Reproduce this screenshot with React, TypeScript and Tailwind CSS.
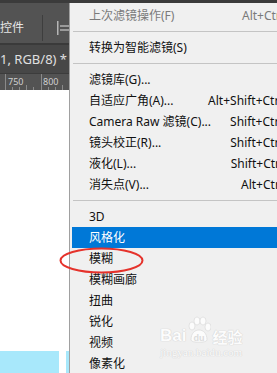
import React from "react";

const FONT = { fontFamily: '"Noto Sans", "Noto Sans CJK SC", sans-serif' };

type Item =
  | { type: "item"; label: string; shortcut?: string; disabled?: boolean; active?: boolean }
  | { type: "sep" };

const items: Item[] = [
  { type: "item", label: "上次滤镜操作(F)", shortcut: "Alt+Ctrl+F", disabled: true },
  { type: "sep" },
  { type: "item", label: "转换为智能滤镜(S)" },
  { type: "sep" },
  { type: "item", label: "滤镜库(G)..." },
  { type: "item", label: "自适应广角(A)...", shortcut: "Alt+Shift+Ctrl+A" },
  { type: "item", label: "Camera Raw 滤镜(C)...", shortcut: "Shift+Ctrl+A" },
  { type: "item", label: "镜头校正(R)...", shortcut: "Shift+Ctrl+R" },
  { type: "item", label: "液化(L)...", shortcut: "Shift+Ctrl+X" },
  { type: "item", label: "消失点(V)...", shortcut: "Alt+Ctrl+V" },
  { type: "sep" },
  { type: "item", label: "3D" },
  { type: "item", label: "风格化", active: true },
  { type: "item", label: "模糊" },
  { type: "item", label: "模糊画廊" },
  { type: "item", label: "扭曲" },
  { type: "item", label: "锐化" },
  { type: "item", label: "视频" },
  { type: "item", label: "像素化" },
];

function LeftPanel() {
  return (
    <div className="w-[69px] shrink-0 flex flex-col overflow-hidden">
      <div className="h-[40px] bg-[#535353] flex items-center pt-[9px] relative overflow-hidden">
        <span className="text-[12px] text-[#e6e6e6] ml-[-24px] whitespace-nowrap" style={FONT}>
          变换控件
        </span>
        <div className="absolute left-[42px] top-[12px] w-px h-[26px] bg-[#3e3e3e]" />
        <svg className="absolute left-[57px] top-[18px]" width="12" height="14" viewBox="0 0 12 14">
          <rect x="0" y="0" width="1.5" height="14" fill="#b5b5b5" />
          <rect x="3" y="4" width="9" height="2" fill="#9a9a9a" />
          <rect x="3" y="8" width="9" height="2" fill="#9a9a9a" />
        </svg>
      </div>
      <div className="h-[2px] bg-[#3a3a3a]" />
      <div className="h-[28px] bg-[#474747] flex items-center pt-[2px]">
        <span className="text-[13px] text-[#e0e0e0] whitespace-nowrap" style={FONT}>
          1, RGB/8) *
        </span>
      </div>
      <div className="h-[17px] bg-[#535353] border-t border-[#3c3c3c] relative">
        <div className="absolute left-[5px] top-0 w-px h-full bg-[#8a8a8a]" />
        <div className="absolute left-[41px] top-0 w-px h-full bg-[#8a8a8a]" />
        <span className="absolute left-[8px] top-[1px] text-[9px] text-[#cfcfcf]" style={FONT}>750</span>
        <span className="absolute left-[43px] top-[1px] text-[9px] text-[#cfcfcf]" style={FONT}>800</span>
        <div className="absolute left-[12px] bottom-0 w-px h-[3px] bg-[#8a8a8a]" />
        <div className="absolute left-[19px] bottom-0 w-px h-[3px] bg-[#8a8a8a]" />
        <div className="absolute left-[26px] bottom-0 w-px h-[5px] bg-[#8a8a8a]" />
        <div className="absolute left-[33px] bottom-0 w-px h-[3px] bg-[#8a8a8a]" />
        <div className="absolute left-[48px] bottom-0 w-px h-[3px] bg-[#8a8a8a]" />
        <div className="absolute left-[55px] bottom-0 w-px h-[3px] bg-[#8a8a8a]" />
        <div className="absolute left-[62px] bottom-0 w-px h-[5px] bg-[#8a8a8a]" />
      </div>
      <div className="flex-1 bg-white flex flex-col justify-end">
        <div className="h-[23px] flex">
          <div className="w-[59px] bg-[#a8e8fb]" />
          <div className="w-[7px]" />
          <div className="flex-1 bg-[#a8e8fb]" />
        </div>
      </div>
    </div>
  );
}

function Menu() {
  return (
    <div className="w-[240px] shrink-0 bg-[#f0f0f0] border-l border-[#a0a0a0] pt-[2px] pl-[2px]" style={FONT}>
      {items.map((it, i) =>
        it.type === "sep" ? (
          <div key={i} className="h-[11px] flex items-center pl-[1px]">
            <div className="h-px w-full bg-[#c4c4c4]" />
          </div>
        ) : (
          <div
            key={i}
            className={
              "h-[21px] flex items-center justify-between pl-[17px] pr-[12px] text-[12px] whitespace-nowrap " +
              (it.active ? "bg-[#0078d7] text-white" : it.disabled ? "text-[#7a7a7a]" : "text-[#111111]")
            }
          >
            <span>{it.label}</span>
            {it.shortcut ? <span>{it.shortcut}</span> : null}
          </div>
        )
      )}
    </div>
  );
}

export default function App() {
  return (
    <div className="w-[277px] h-[373px] overflow-hidden relative bg-[#f0f0f0] flex flex-col">
      <div className="h-[3px] bg-[#3b3b3b] shrink-0" />
      <div className="flex flex-1">
        <LeftPanel />
        <Menu />
      </div>
      <svg className="absolute left-0 top-0 pointer-events-none" width="277" height="373">
        <ellipse cx="101.5" cy="260.5" rx="41" ry="12" fill="none" stroke="#e5322b" strokeWidth="2" />
      </svg>
      <div className="absolute left-[160px] top-[316px] flex flex-col items-center pointer-events-none opacity-80">
        <div className="flex items-end">
          <span
            className="text-[17px] font-bold leading-none text-white"
            style={{ fontFamily: '"Liberation Sans", sans-serif', textShadow: "0 0 1px #c8c8c8, 0 0 1px #c8c8c8" }}
          >
            Bai
          </span>
          <svg width="24" height="28" viewBox="0 0 24 28" className="mx-[1px]">
            <g fill="white" stroke="#d0d0d0" strokeWidth="0.6">
              <ellipse cx="5" cy="10" rx="3" ry="4" />
              <ellipse cx="10" cy="5" rx="3" ry="4" />
              <ellipse cx="16" cy="5" rx="3" ry="4" />
              <ellipse cx="21" cy="11" rx="3" ry="4" />
              <path d="M4 24 C4 17 8 14 12 14 C16 14 20 17 20 24 C20 27 4 27 4 24 Z" />
            </g>
            <text x="12" y="25" textAnchor="middle" fontSize="9" fontWeight="bold" fill="#d8d8d8" fontFamily="Liberation Sans, sans-serif">du</text>
          </svg>
          <span
            className="text-[15px] font-bold leading-none text-white"
            style={{ fontFamily: '"Noto Sans CJK SC", sans-serif', textShadow: "0 0 1px #c8c8c8, 0 0 1px #c8c8c8" }}
          >
            经验
          </span>
        </div>
        <span
          className="text-[11px] leading-none mt-[3px] text-white"
          style={{ fontFamily: '"Liberation Serif", serif', textShadow: "0 0 1px #c8c8c8, 0 0 1px #c8c8c8" }}
        >
          jingyan.baidu.com
        </span>
      </div>
    </div>
  );
}
